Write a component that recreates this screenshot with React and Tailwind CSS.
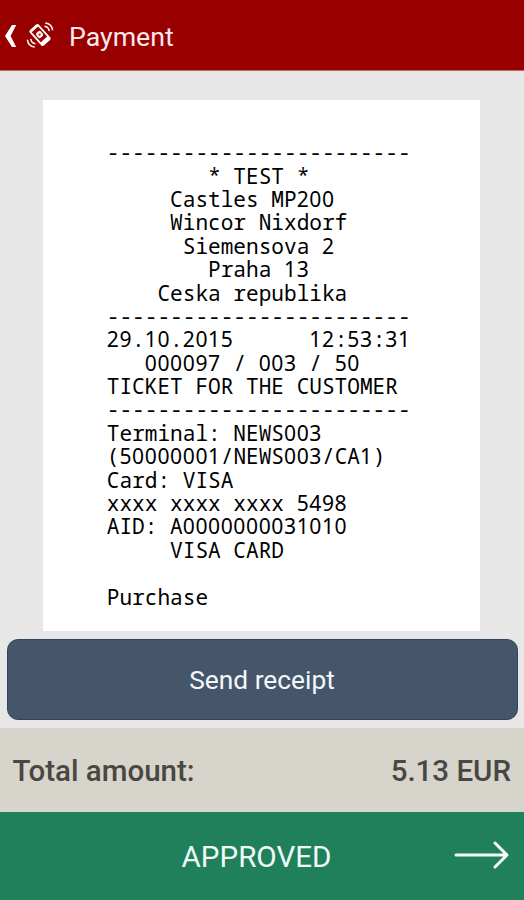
const RULE = "------------------------";

const LINES = [
  RULE,
  "        * TEST *",
  "     Castles MP200",
  "     Wincor Nixdorf",
  "      Siemensova 2",
  "        Praha 13",
  "    Ceska republika",
  RULE,
  "29.10.2015      12:53:31",
  "   000097 / 003 / 50",
  "TICKET FOR THE CUSTOMER",
  RULE,
  "Terminal: NEWS003",
  "(50000001/NEWS003/CA1)",
  "Card: VISA",
  "xxxx xxxx xxxx 5498",
  "AID: A0000000031010",
  "     VISA CARD",
  " ",
  "Purchase",
];

// Digits are set in a face with a plain, tabular zero.
function Line({ text }) {
  return (
    <div className="h-[23.4px] whitespace-pre leading-[23.4px]">
      {text.split(/(\d+)/).map((part, i) =>
        /^\d/.test(part) ? (
          <span key={i} className="font-['Noto_Sans',sans-serif] tracking-[0.59px]">
            {part}
          </span>
        ) : (
          part
        ),
      )}
    </div>
  );
}

function PhoneIcon() {
  return (
    <svg viewBox="0 0 28 28" className="h-7 w-7" fill="none" stroke="#fff">
      <g transform="rotate(-42 14 14)">
        <rect x="7.9" y="3.6" width="12.2" height="20.8" rx="2" fill="#fff" stroke="none" />
        <rect x="9.7" y="6.4" width="8.6" height="13.6" fill="#980000" stroke="none" />
        <rect x="11" y="10.2" width="6" height="6.4" rx="2" fill="#fff" stroke="none" />
        <circle cx="14" cy="13.4" r="1.2" fill="#b33" stroke="none" />
      </g>
      <path d="M18.6 5.2c2.6.4 4.3 2.2 4.7 4.9M19.3 1.9c4.2.5 6.9 3.3 7.3 7.4" strokeWidth="1.5" />
      <path d="M9.4 22.8c-2.6-.4-4.3-2.2-4.7-4.9M8.7 26.1c-4.2-.5-6.9-3.3-7.3-7.4" strokeWidth="1.5" />
    </svg>
  );
}

export default function App() {
  return (
    <div className="flex h-[900px] w-[524px] flex-col overflow-hidden bg-[#e7e7e7] font-[Roboto,sans-serif]">
      <header className="flex h-[71px] shrink-0 items-center border-b border-[#b86a6a] bg-[#980000] pl-[5px] text-white">
        <svg viewBox="0 0 12 22" className="mt-px h-[22px] w-3" fill="#fff">
          <path d="M7 0H11.2L5.6 11L11.2 22H7L0 11Z" />
        </svg>
        <span className="ml-[9px]">
          <PhoneIcon />
        </span>
        <h1 className="ml-[15px] mt-[3px] text-[26.7px] leading-[30px] text-[#fbe9e9]">Payment</h1>
      </header>

      <main className="flex flex-1 flex-col items-center">
        <section className="ml-[-1px] mt-[29px] h-[531px] w-[437px] bg-white pl-[63.8px] pt-[40.2px] font-['Noto_Sans_Mono','DejaVu_Sans_Mono',monospace] text-[21.1px] text-black">
          {LINES.map((text, i) => (
            <Line key={i} text={text} />
          ))}
        </section>
        <button className="mt-[8px] h-[81px] w-[511px] rounded-[11px] border border-[#30465c] bg-[#45566a] pt-[3px] text-[26.3px] text-[#f3f7fb]">
          Send receipt
        </button>
      </main>

      <div className="flex h-[84px] shrink-0 items-center justify-between bg-[#d7d4cb] pl-[12.5px] pr-[13px] pt-[3px] text-[29.5px] font-medium text-[#484743]">
        <span>Total amount:</span>
        <span>5.13 EUR</span>
      </div>

      <footer className="relative flex h-[88px] shrink-0 items-center justify-center bg-[#20805c] pr-[11px] text-[29.6px] text-[#effaf4]">
        <span className="pt-[2px]">APPROVED</span>
        <svg
          viewBox="0 0 56 30"
          className="absolute left-[454px] top-[28px] h-[30px] w-14"
          fill="none"
          stroke="#f4fff9"
          strokeWidth="3"
          strokeLinecap="round"
          strokeLinejoin="round"
        >
          <path d="M2 15H53M41 3L53 15L41 27" />
        </svg>
      </footer>
    </div>
  );
}
